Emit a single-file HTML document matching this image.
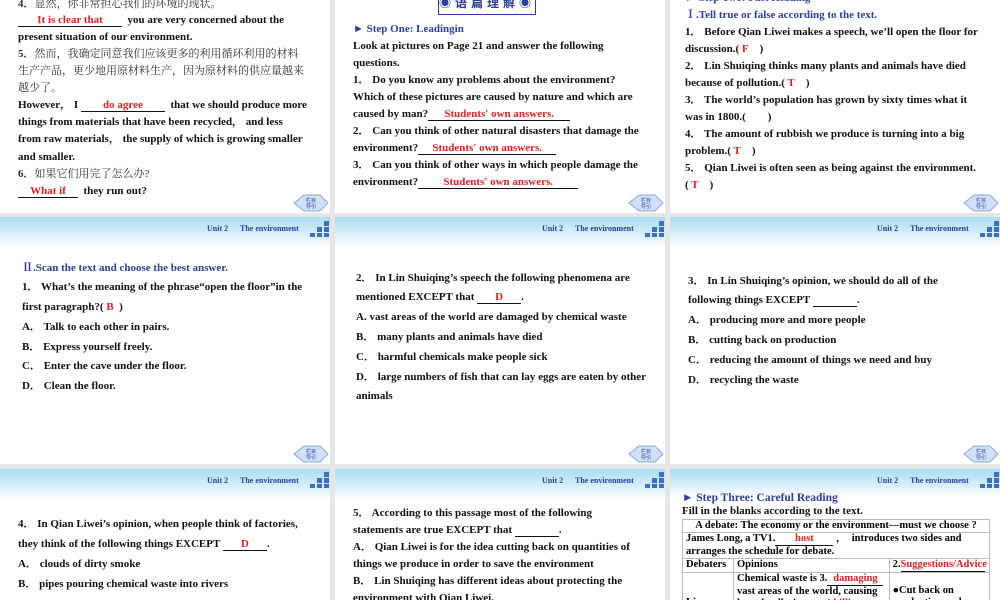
<!DOCTYPE html>
<html><head><meta charset="utf-8"><style>
body{margin:0;width:1000px;height:600px;background:#e6e6e6;position:relative;overflow:hidden;font-family:"Liberation Serif","Noto Serif CJK SC",serif;}
.s{position:absolute;background:#fff;overflow:hidden}
.l{position:absolute;white-space:nowrap;font-weight:bold;font-size:11px;line-height:14px;color:#111;z-index:3}
.cn{font-weight:normal;font-family:"Liberation Serif","Noto Serif CJK SC",serif;color:#333}
.b{color:#2b3f9c}
.r{color:#d22}
.bl{display:inline-block;border-bottom:1px solid #111;text-align:center;color:#d22;line-height:12px}
.hd{position:absolute;left:0;top:0;width:330px;height:30px;background:linear-gradient(#a9dcf0,#d9f0f9 60%,#fff);z-index:1}
.hd .u{position:absolute;top:7px;font-size:8px;font-weight:bold;color:#2b3f9c;white-space:nowrap}
table{border-collapse:collapse;font-size:10.5px;font-weight:bold;z-index:3}
td{border:1px solid #bbb;padding:0 3px;line-height:12px;vertical-align:top}
</style></head><body>

<!-- headers -->
<div class="hd" style="left:0;top:217px"><span class="u" style="left:207px">Unit 2</span><span class="u" style="left:240px">The environment</span></div>
<div class="hd" style="left:335px;top:217px"><span class="u" style="left:207px">Unit 2</span><span class="u" style="left:240px">The environment</span></div>
<div class="hd" style="left:670px;top:217px"><span class="u" style="left:207px">Unit 2</span><span class="u" style="left:240px">The environment</span></div>
<div class="hd" style="left:0;top:469px"><span class="u" style="left:207px">Unit 2</span><span class="u" style="left:240px">The environment</span></div>
<div class="hd" style="left:335px;top:469px"><span class="u" style="left:207px">Unit 2</span><span class="u" style="left:240px">The environment</span></div>

<!-- ROW 1 -->
<div class="s" style="left:0;top:0;width:330px;height:213px">
<div class="l cn" style="left:18px;top:-3px"><b>4．</b>显然，你非常担心我们的环境的现状。</div>
<div class="l" style="left:18px;top:13px"><span class="bl" style="width:104px">It is clear that</span>&nbsp;&nbsp;you are very concerned about the</div>
<div class="l" style="left:18px;top:30px">present situation of our environment.</div>
<div class="l cn" style="left:18px;top:47px"><b>5．</b>然而，我确定同意我们应该更多的利用循环利用的材料</div>
<div class="l cn" style="left:18px;top:64px">生产产品，更少地用原材料生产，因为原材料的供应量越来</div>
<div class="l cn" style="left:18px;top:81px">越少了。</div>
<div class="l" style="left:18px;top:98px">However， I <span class="bl" style="width:84px">do agree</span>&nbsp;&nbsp;that we should produce more</div>
<div class="l" style="left:18px;top:115px">things from materials that have been recycled， and less</div>
<div class="l" style="left:18px;top:132px">from raw materials， the supply of which is growing smaller</div>
<div class="l" style="left:18px;top:150px">and smaller.</div>
<div class="l cn" style="left:18px;top:167px"><b>6．</b>如果它们用完了怎么办?</div>
<div class="l" style="left:18px;top:184px"><span class="bl" style="width:60px">What if</span>&nbsp;&nbsp;they run out?</div>
</div>

<div class="s" style="left:335px;top:0;width:330px;height:213px">
<div style="position:absolute;left:103px;top:-6px;width:96px;height:20px;border:1px solid #2b3f9c;border-top:none;text-align:center;font:bold 12px/18px 'Noto Sans CJK SC',sans-serif;color:#2b3f9c;letter-spacing:4px">◉语篇理解◉</div>
<div class="l b" style="left:18px;top:22px">► Step One: Leadingin</div>
<div class="l" style="left:18px;top:39px">Look at pictures on Page 21 and answer the following</div>
<div class="l" style="left:18px;top:56px">questions.</div>
<div class="l" style="left:18px;top:73px">1． Do you know any problems about the environment?</div>
<div class="l" style="left:18px;top:90px">Which of these pictures are caused by nature and which are</div>
<div class="l" style="left:18px;top:107px">caused by man?<span class="bl" style="width:142px">Students' own answers.</span></div>
<div class="l" style="left:18px;top:124px">2． Can you think of other natural disasters that damage the</div>
<div class="l" style="left:18px;top:141px">environment?<span class="bl" style="width:138px">Students' own answers.</span></div>
<div class="l" style="left:18px;top:158px">3． Can you think of other ways in which people damage the</div>
<div class="l" style="left:18px;top:175px">environment?<span class="bl" style="width:160px">Students' own answers.</span></div>
</div>

<div class="s" style="left:670px;top:0;width:330px;height:213px">
<div class="l b" style="left:15px;top:-9px">► Step Two: Fast Reading</div>
<div class="l b" style="left:15px;top:8px">Ⅰ.Tell true or false according to the text.</div>
<div class="l" style="left:15px;top:25px">1． Before Qian Liwei makes a speech, we’ll open the floor for</div>
<div class="l" style="left:15px;top:42px">discussion.( <span class="r">F</span>&nbsp;&nbsp;&nbsp; )</div>
<div class="l" style="left:15px;top:59px">2． Lin Shuiqing thinks many plants and animals have died</div>
<div class="l" style="left:15px;top:76px">because of pollution.( <span class="r">T</span>&nbsp;&nbsp;&nbsp; )</div>
<div class="l" style="left:15px;top:93px">3． The world’s population has grown by sixty times what it</div>
<div class="l" style="left:15px;top:110px">was in 1800.(&nbsp;&nbsp;&nbsp;&nbsp;&nbsp;&nbsp;&nbsp; )</div>
<div class="l" style="left:15px;top:127px">4． The amount of rubbish we produce is turning into a big</div>
<div class="l" style="left:15px;top:144px">problem.( <span class="r">T</span>&nbsp;&nbsp;&nbsp; )</div>
<div class="l" style="left:15px;top:161px">5． Qian Liwei is often seen as being against the environment.</div>
<div class="l" style="left:15px;top:178px">( <span class="r">T</span>&nbsp;&nbsp;&nbsp; )</div>
</div>

<!-- ROW 2 -->
<div class="s" style="left:0;top:217px;width:330px;height:247px">
<div class="l b" style="left:22px;top:44px">Ⅱ.Scan the text and choose the best answer.</div>
<div class="l" style="left:22px;top:63px">1． What’s the meaning of the phrase“open the floor”in the</div>
<div class="l" style="left:22px;top:83px">first paragraph?( <span class="r">B</span>&nbsp; )</div>
<div class="l" style="left:22px;top:103px">A． Talk to each other in pairs.</div>
<div class="l" style="left:22px;top:123px">B． Express yourself freely.</div>
<div class="l" style="left:22px;top:142px">C． Enter the cave under the floor.</div>
<div class="l" style="left:22px;top:162px">D． Clean the floor.</div>
</div>

<div class="s" style="left:335px;top:217px;width:330px;height:247px">
<div class="l" style="left:21px;top:54px">2． In Lin Shuiqing’s speech the following phenomena are</div>
<div class="l" style="left:21px;top:73px">mentioned EXCEPT that <span class="bl" style="width:44px">D</span>.</div>
<div class="l" style="left:21px;top:93px">A. vast areas of the world are damaged by chemical waste</div>
<div class="l" style="left:21px;top:113px">B． many plants and animals have died</div>
<div class="l" style="left:21px;top:133px">C． harmful chemicals make people sick</div>
<div class="l" style="left:21px;top:153px">D． large numbers of fish that can lay eggs are eaten by other</div>
<div class="l" style="left:21px;top:172px">animals</div>
</div>

<div class="s" style="left:670px;top:217px;width:330px;height:247px">
<div class="l" style="left:18px;top:57px">3． In Lin Shuiqing’s opinion, we should do all of the</div>
<div class="l" style="left:18px;top:76px">following things EXCEPT <span class="bl" style="width:44px">&nbsp;</span>.</div>
<div class="l" style="left:18px;top:96px">A． producing more and more people</div>
<div class="l" style="left:18px;top:116px">B． cutting back on production</div>
<div class="l" style="left:18px;top:136px">C． reducing the amount of things we need and buy</div>
<div class="l" style="left:18px;top:156px">D． recycling the waste</div>
</div>

<!-- ROW 3 -->
<div class="s" style="left:0;top:469px;width:330px;height:131px">
<div class="l" style="left:18px;top:48px">4． In Qian Liwei’s opinion, when people think of factories,</div>
<div class="l" style="left:18px;top:68px">they think of the following things EXCEPT <span class="bl" style="width:44px">D</span>.</div>
<div class="l" style="left:18px;top:88px">A． clouds of dirty smoke</div>
<div class="l" style="left:18px;top:108px">B． pipes pouring chemical waste into rivers</div>
</div>

<div class="s" style="left:335px;top:469px;width:330px;height:131px">
<div class="l" style="left:18px;top:37px">5． According to this passage most of the following</div>
<div class="l" style="left:18px;top:54px">statements are true EXCEPT that <span class="bl" style="width:44px">&nbsp;</span>.</div>
<div class="l" style="left:18px;top:71px">A． Qian Liwei is for the idea cutting back on quantities of</div>
<div class="l" style="left:18px;top:88px">things we produce in order to save the environment</div>
<div class="l" style="left:18px;top:105px">B． Lin Shuiqing has different ideas about protecting the</div>
<div class="l" style="left:18px;top:122px">environment with Qian Liwei.</div>
</div>

<div class="s" style="left:670px;top:469px;width:330px;height:131px">
<div class="hd" style="left:0;top:0;height:28px"><span class="u" style="left:207px">Unit 2</span><span class="u" style="left:240px">The environment</span></div>
<div class="l b" style="left:12px;top:22px;font-size:11.5px">► Step Three: Careful Reading</div>
<div class="l" style="left:12px;top:35px">Fill in the blanks according to the text.</div>
<table style="position:absolute;left:12px;top:50px;width:308px">
<tr><td colspan="3" style="text-align:center">A debate: The economy or the environment—must we choose ?</td></tr>
<tr><td colspan="3">James Long, a TV1.<span class="bl" style="width:58px">host</span> ，&nbsp; introduces two sides and<br>arranges the schedule for debate.</td></tr>
<tr><td style="width:44px">Debaters</td><td>Opinions</td><td>2.<span class="bl" style="width:84px">Suggestions/Advice</span></td></tr>
<tr><td style="height:40px"><br><br>Lin</td><td>Chemical waste is 3.<span class="bl" style="width:56px">damaging</span><br>vast areas of the world, causing<br>lots of pollution，&nbsp;&nbsp;&nbsp;<span class="r">4.killing</span></td><td><br>●Cut back on<br>production and</td></tr>
</table>
</div>

<svg width="1000" height="600" style="position:absolute;left:0;top:0;pointer-events:none;z-index:5">
<defs>
<g id="sq" fill="#3a6fc4"><rect x="14" y="0" width="5" height="5"/><rect x="7" y="6" width="5" height="5"/><rect x="14" y="6" width="5" height="5"/><rect x="0" y="12" width="5" height="4"/><rect x="7" y="12" width="5" height="4"/><rect x="14" y="12" width="5" height="4"/></g>
<g id="nv"><polygon points="0,8 10,0 26,0 34,8 26,16 10,16" fill="#cfe0f7" stroke="#8aaade" stroke-width="1"/><text x="17" y="7" font-size="5" text-anchor="middle" fill="#2b3f9c" font-family="Noto Sans CJK SC,sans-serif">栏目</text><text x="17" y="13" font-size="5" text-anchor="middle" fill="#2b3f9c" font-family="Noto Sans CJK SC,sans-serif">导引</text></g>
</defs>
<use href="#sq" x="310" y="221"/><use href="#sq" x="645" y="221"/><use href="#sq" x="980" y="221"/>
<use href="#sq" x="310" y="472"/><use href="#sq" x="645" y="472"/><use href="#sq" x="980" y="472"/>
<use href="#nv" x="294" y="195"/><use href="#nv" x="629" y="195"/><use href="#nv" x="964" y="195"/>
<use href="#nv" x="294" y="446"/><use href="#nv" x="629" y="446"/><use href="#nv" x="964" y="446"/>
</svg>
</body></html>
